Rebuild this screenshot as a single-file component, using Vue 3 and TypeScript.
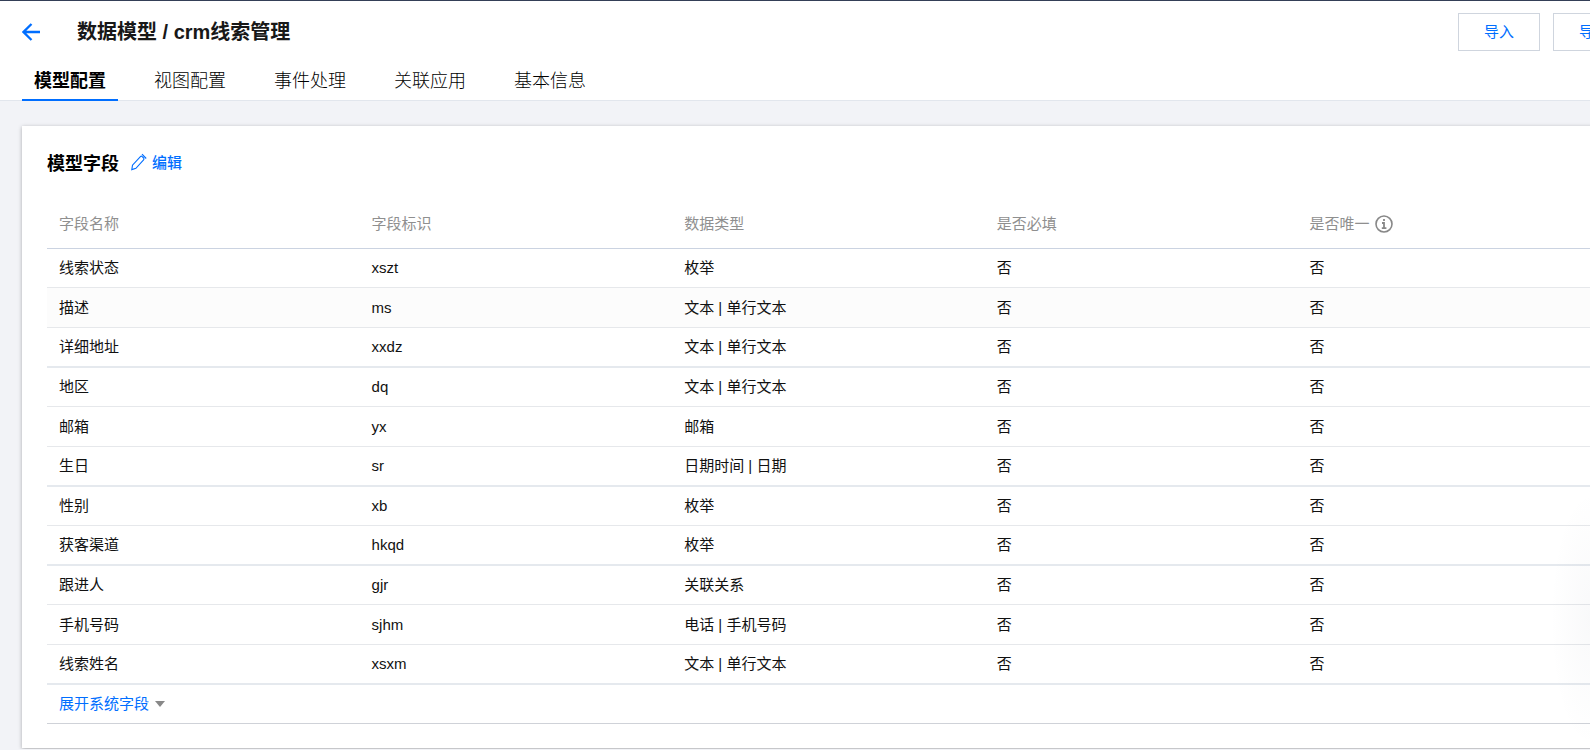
<script setup lang="ts">
import { ref } from 'vue'

interface Field {
  name: string
  key: string
  type: string
  required: string
  unique: string
}

const tabs: string[] = ['模型配置', '视图配置', '事件处理', '关联应用', '基本信息']
const activeTab = ref(0)

const field = (name: string, key: string, type: string): Field => ({
  name,
  key,
  type,
  required: '否',
  unique: '否',
})

const fields: Field[] = [
  field('线索状态', 'xszt', '枚举'),
  field('描述', 'ms', '文本 | 单行文本'),
  field('详细地址', 'xxdz', '文本 | 单行文本'),
  field('地区', 'dq', '文本 | 单行文本'),
  field('邮箱', 'yx', '邮箱'),
  field('生日', 'sr', '日期时间 | 日期'),
  field('性别', 'xb', '枚举'),
  field('获客渠道', 'hkqd', '枚举'),
  field('跟进人', 'gjr', '关联关系'),
  field('手机号码', 'sjhm', '电话 | 手机号码'),
  field('线索姓名', 'xsxm', '文本 | 单行文本'),
]
</script>

<template>
  <div class="viewport">
    <div class="page">
      <header class="top">
        <div class="bar">
          <a class="back" href="#" aria-label="返回">
            <svg width="18" height="18" viewBox="0 0 18 18" fill="none" stroke="currentColor" stroke-width="2.3">
              <path d="M9.5 1 1.5 9l8 8M1.5 9H18" />
            </svg>
          </a>
          <h1>数据模型 / crm线索管理</h1>
          <div class="actions">
            <button type="button">导入</button>
            <button type="button">导出</button>
          </div>
        </div>
        <nav class="tabs">
          <button
            v-for="(tab, i) in tabs"
            :key="tab"
            type="button"
            :class="{ active: i === activeTab }"
            @click="activeTab = i"
          >{{ tab }}</button>
        </nav>
      </header>

      <main>
        <section class="card">
          <div class="card-head">
            <h2>模型字段</h2>
            <a class="edit" href="#">
              <svg width="16" height="20" viewBox="0 0 16 20" fill="none" stroke="currentColor" stroke-width="1.1">
                <path d="M.8 16.6 1.5 12.2 9.4 3.6q.9-.9 1.8 0l1.4 1.4q.8.9 0 1.8L4.9 15.3zM11 1.1l4.2 4.4" />
              </svg>
              <span>编辑</span>
            </a>
          </div>
          <table>
            <thead>
              <tr>
                <th>字段名称</th>
                <th>字段标识</th>
                <th>数据类型</th>
                <th>是否必填</th>
                <th>
                  <span class="hint">
                    是否唯一
                    <svg width="18" height="18" viewBox="0 0 18 18" fill="none" stroke="currentColor">
                      <circle cx="9" cy="9" r="8" stroke-width="1.6" />
                      <path d="M9 4v2M7 8h2v5M6.8 13.2h4.6" stroke-width="1.8" />
                    </svg>
                  </span>
                </th>
              </tr>
            </thead>
            <tbody>
              <tr v-for="f in fields" :key="f.key">
                <td>{{ f.name }}</td>
                <td>{{ f.key }}</td>
                <td>{{ f.type }}</td>
                <td>{{ f.required }}</td>
                <td>{{ f.unique }}</td>
              </tr>
            </tbody>
            <tfoot>
              <tr>
                <td colspan="5">
                  <button class="expand" type="button">展开系统字段<i class="caret"></i></button>
                </td>
              </tr>
            </tfoot>
          </table>
        </section>
      </main>
    </div>
    <div class="glow"></div>
  </div>
</template>

<style>
body {
  margin: 0;
  background: #f2f3f7;
}
</style>

<style scoped>
.viewport {
  position: relative;
  overflow: hidden;
  font-family: 'Liberation Sans', 'Noto Sans CJK SC', sans-serif;
  font-size: 15px;
  line-height: 20px;
  color: #111;
}
.page {
  width: calc(100% + 67px);
}
button {
  font: inherit;
  cursor: pointer;
}
a {
  text-decoration: none;
}
.top {
  background: #fff;
  border-top: 1px solid #343f57;
  border-bottom: 1px solid #e2e6ed;
  padding: 0 22px;
}
.bar {
  display: flex;
  align-items: center;
  height: 62px;
}
.back {
  display: flex;
  color: #006eff;
}
h1 {
  flex: 1;
  margin: 0 0 0 37px;
  font-size: 20px;
  line-height: 28px;
  color: #181818;
}
.actions {
  display: flex;
  gap: 13px;
}
.actions button {
  width: 82px;
  height: 38px;
  padding: 0;
  border: 1px solid #cfd5de;
  background: #fff;
  color: #006eff;
}
.tabs {
  display: flex;
  gap: 24px;
  height: 37px;
}
.tabs button {
  height: 38px;
  padding: 0 12px;
  border: 0;
  border-bottom: 2px solid transparent;
  background: none;
  font-size: 18px;
  font-weight: 300;
  color: #000;
}
.tabs .active {
  border-bottom-color: #006eff;
  font-weight: bold;
}
main {
  padding: 25px 22px 1px;
}
.card {
  padding: 25px 25px 24px;
  background: #fff;
  box-shadow: 0 1px 4px rgba(0, 0, 0, 0.3);
}
.card-head {
  display: flex;
  align-items: flex-start;
  gap: 12px;
  height: 26px;
}
h2 {
  margin: 0;
  font-size: 18px;
  line-height: 26px;
  color: #000;
}
.edit {
  display: flex;
  align-items: center;
  gap: 5px;
  line-height: 24px;
  color: #006eff;
  font-weight: 500;
}
table {
  width: 100%;
  margin-top: 22px;
  table-layout: fixed;
  border-collapse: separate;
  border-spacing: 0;
}
th,
td {
  box-sizing: border-box;
  height: 40px;
  padding: 0 12px;
  border-bottom: 1px solid #e6e8eb;
  text-align: left;
  vertical-align: middle;
}
th {
  height: 50px;
  border-bottom-color: #cbd3e1;
  font-weight: normal;
  color: #8f8f8f;
}
tbody tr:nth-child(3n + 1) td,
tbody tr:nth-child(9) td {
  height: 39px;
}
tbody tr:nth-child(10) td {
  height: 40px;
}
tbody tr:nth-child(3) td,
tbody tr:nth-child(6) td,
tbody tr:nth-child(8) td,
tbody tr:nth-child(11) td {
  border-bottom: 2px solid #e5e9ee;
}
tbody tr:nth-child(2) {
  background: #fcfcfc;
}
tfoot td {
  height: 39px;
  border-bottom-color: #cfd2d8;
}
.hint {
  display: flex;
  align-items: center;
  gap: 6px;
}
.hint svg {
  color: #888;
}
.expand {
  display: flex;
  align-items: center;
  gap: 6px;
  padding: 0;
  border: 0;
  background: none;
  color: #006eff;
}
.caret {
  border: 5px solid transparent;
  border-top: 6px solid #888;
  border-bottom: 0;
}
.glow {
  position: absolute;
  right: 0;
  bottom: 0;
  width: 40px;
  height: 260px;
  background: radial-gradient(ellipse at 100% 50%, rgba(60, 70, 100, 0.03), transparent 70%);
  pointer-events: none;
}
</style>
